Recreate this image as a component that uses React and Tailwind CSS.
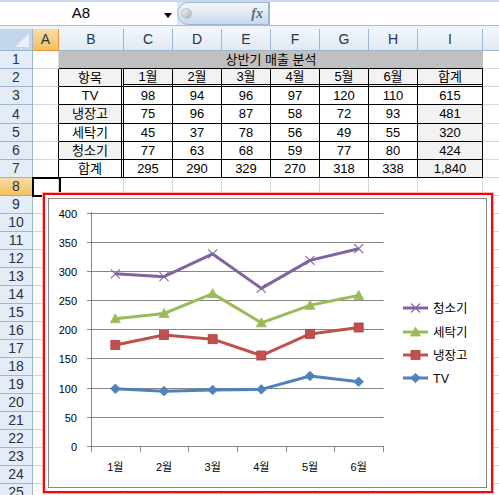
import React from 'react'

const FONT = "font-['Liberation_Sans','Noto_Sans_CJK_KR',sans-serif]"

const COL_W = ['w-[26px]', 'w-[65px]', 'w-[49px]', 'w-[49px]', 'w-[49px]', 'w-[49px]', 'w-[49px]', 'w-[49px]', 'w-[65px]']
const LETTERS = ['A', 'B', 'C', 'D', 'E', 'F', 'G', 'H', 'I']

const months = ['1월', '2월', '3월', '4월', '5월', '6월']
const raw = [
  { name: 'TV', color: '#4f81bd', marker: 'diamond', vals: [98, 94, 96, 97, 120, 110] },
  { name: '냉장고', color: '#c0504d', marker: 'square', vals: [75, 96, 87, 58, 72, 93] },
  { name: '세탁기', color: '#9bbb59', marker: 'triangle', vals: [45, 37, 78, 56, 49, 55] },
  { name: '청소기', color: '#8064a2', marker: 'x', vals: [77, 63, 68, 59, 77, 80] },
]
const totals = months.map((_, i) => raw.reduce((s, r) => s + r.vals[i], 0))

// row heights of the sheet (rows 1..7)
const ROW_H = ['h-[18px]', 'h-[18px]', 'h-[18px]', 'h-[19px]', 'h-[18px]', 'h-[18px]', 'h-[18px]']

function RowHead({ n, selected, h = 'h-[18px]' }) {
  return (
    <div
      className={`w-[33px] shrink-0 ${h} flex items-center justify-center text-[14px] text-[#2a3444] border-r border-b ${
        selected
          ? 'bg-gradient-to-b from-[#f9dca6] to-[#f1c15f] border-[#f29536]'
          : 'bg-[#e4ecf7] border-[#9eb6ce]'
      }`}
    >
      {n}
    </div>
  )
}

function Blank({ w }) {
  return <div className={`${w} shrink-0 border-r border-b border-[#d0d7e5] bg-white`} />
}

function EmptyRow({ n, selected }) {
  return (
    <div className="flex h-[18px]">
      <RowHead n={n} selected={selected} />
      {COL_W.map((w, i) => <Blank key={i} w={w} />)}
      <div className="flex-1 border-b border-[#d0d7e5] bg-white" />
    </div>
  )
}

function TableRow({ n, h, label, cells, total, header, labelGray, totalGray }) {
  return (
    <div className={`flex ${h}`}>
      <RowHead n={n} h={h} />
      <div className="w-[26px] shrink-0 border-r border-b border-r-black border-b-[#d0d7e5] bg-white" />
      <div
        className={`w-[65px] shrink-0 flex items-center justify-center border-r-[3px] border-double border-r-black border-b border-b-black ${
          labelGray ? 'bg-[#f2f2f2]' : 'bg-white'
        }`}
      >
        {label}
      </div>
      {cells.map((c, i) => (
        <div
          key={i}
          className={`w-[49px] shrink-0 flex items-center justify-center border-r border-black ${
            header ? 'border-b-[3px] border-double bg-[#f2f2f2]' : 'border-b bg-white'
          }`}
        >
          {c}
        </div>
      ))}
      <div
        className={`w-[65px] shrink-0 flex items-center justify-center border-r border-black ${
          header ? 'border-b-[3px] border-double' : 'border-b'
        } ${totalGray ? 'bg-[#f2f2f2]' : 'bg-white'}`}
      >
        {total}
      </div>
      <div className="flex-1 border-b border-[#d0d7e5] bg-white" />
    </div>
  )
}

function Marker({ type, x, y, color }) {
  if (type === 'diamond')
    return <polygon points={`${x},${y - 4.8} ${x + 4.8},${y} ${x},${y + 4.8} ${x - 4.8},${y}`} fill={color} stroke={color} strokeWidth="0.8" />
  if (type === 'square')
    return <rect x={x - 4.5} y={y - 4.5} width="9" height="9" fill={color} stroke="#b0403d" strokeWidth="0.8" />
  if (type === 'triangle')
    return <polygon points={`${x},${y - 5} ${x + 5},${y + 4} ${x - 5},${y + 4}`} fill={color} stroke={color} strokeWidth="0.8" />
  return (
    <g stroke={color} strokeWidth="1.1">
      <line x1={x - 4.5} y1={y - 4.5} x2={x + 4.5} y2={y + 4.5} />
      <line x1={x - 4.5} y1={y + 4.5} x2={x + 4.5} y2={y - 4.5} />
    </g>
  )
}

function Chart() {
  const X0 = 91
  const X1 = 383
  const step = (X1 - X0) / 6
  const xs = months.map((_, i) => X0 + step * (i + 0.5))
  const yOf = v => 446 - v * (233.5 / 400)
  let acc = [0, 0, 0, 0, 0, 0]
  const series = raw.map(r => {
    acc = acc.map((a, i) => a + r.vals[i])
    return { ...r, stacked: acc }
  })
  const legendY = { 청소기: 308, 세탁기: 332, 냉장고: 355, TV: 378 }

  return (
    <svg width="437" height="288" viewBox="49 199 437 288" className="block">
      {/* gridlines + value axis */}
      {[0, 50, 100, 150, 200, 250, 300, 350, 400].map(v => {
        const y = Math.round(yOf(v)) + 0.5
        return (
          <g key={v}>
            <line x1="87" x2={X1 + 0.5} y1={y} y2={y} stroke="#868686" strokeWidth="1" />
            <text x="77" y={y + 4} textAnchor="end" fontSize="11" fill="#000">{v}</text>
          </g>
        )
      })}
      <line x1={X0 + 0.5} x2={X0 + 0.5} y1="212" y2="446" stroke="#868686" strokeWidth="1" />
      {[0, 1, 2, 3, 4, 5, 6].map(i => {
        const x = Math.round(X0 + step * i) + 0.5
        return <line key={i} x1={x} x2={x} y1="446" y2="452" stroke="#868686" strokeWidth="1" />
      })}
      {months.map((m, i) => (
        <text key={m} x={xs[i]} y="471" textAnchor="middle" fontSize="11" fill="#000">{m}</text>
      ))}

      {/* series */}
      {series.map(s => (
        <g key={s.name}>
          <polyline
            points={s.stacked.map((v, i) => `${xs[i]},${yOf(v)}`).join(' ')}
            fill="none"
            stroke={s.color}
            strokeWidth="3"
            strokeLinejoin="round"
          />
          {s.stacked.map((v, i) => (
            <Marker key={i} type={s.marker} x={xs[i]} y={yOf(v)} color={s.color} />
          ))}
        </g>
      ))}

      {/* legend */}
      {series.map(s => (
        <g key={s.name}>
          <line x1="403" x2="428" y1={legendY[s.name]} y2={legendY[s.name]} stroke={s.color} strokeWidth="3" />
          <Marker type={s.marker} x={415.5} y={legendY[s.name]} color={s.color} />
          <text x="433" y={legendY[s.name] + 4.5} fontSize="12.5" fill="#000">{s.name}</text>
        </g>
      ))}
    </svg>
  )
}

export default function App() {
  return (
    <div className={`relative w-[499px] h-[495px] overflow-hidden bg-white ${FONT} text-black`}>

      {/* Formula bar */}
      <div className="h-[29px] bg-[#dde7f3] flex flex-col">
        <div className="h-[2px] bg-[#c9d8ec]" />
        <div className="h-[23px] flex">
          <div className="w-[177px] shrink-0 bg-white flex items-center relative">
            <span className="w-[160px] text-center text-[15px] pl-[2px]">A8</span>
            <svg width="8" height="5" viewBox="0 0 8 5" className="absolute left-[164px] top-[11px]">
              <polygon points="0,0 8,0 4,5" fill="#000" />
            </svg>
          </div>
          <div className="w-[92px] shrink-0 rounded-l-full border border-[#9fb5d0] bg-gradient-to-b from-[#f5f8fc] to-[#c8d8ed] flex items-center justify-between pl-[3px] pr-[5px]">
            <div className="w-[11px] h-[11px] rounded-full bg-gradient-to-br from-[#f4f4f4] to-[#a9b1bb] border border-[#b8c2ce]" />
            <span className="font-['Liberation_Serif',serif] italic font-bold text-[14px] text-[#5f6c7d] leading-none">fx</span>
          </div>
          <div className="flex-1 bg-white border-l border-[#9eb6ce]" />
        </div>
        <div className="h-[1px] bg-[#a9bfd9]" />
        <div className="flex-1 bg-[#eef3fa]" />
      </div>

      {/* Column headers */}
      <div className="flex h-[22px]">
        <div className="w-[33px] shrink-0 bg-[#c3d6ee] border-r border-b border-[#9eb6ce] relative">
          <svg width="14" height="14" viewBox="0 0 14 14" className="absolute right-[3px] bottom-[3px]">
            <polygon points="14,0 14,14 0,14" fill="#e9f0f9" />
          </svg>
        </div>
        {LETTERS.map((l, i) => (
          <div
            key={l}
            className={`${COL_W[i]} shrink-0 flex items-center justify-center text-[14px] text-[#2a3444] border-r border-b ${
              l === 'A'
                ? 'bg-gradient-to-b from-[#f9dca6] to-[#f1c15f] border-[#f29536]'
                : 'bg-gradient-to-b from-[#f3f7fc] to-[#e0e9f5] border-[#9eb6ce]'
            }`}
          >
            {l}
          </div>
        ))}
        <div className="flex-1 bg-gradient-to-b from-[#f3f7fc] to-[#e0e9f5] border-b border-[#9eb6ce]" />
      </div>

      {/* Sheet */}
      <div className="text-[13px]">
        <div className="flex h-[18px]">
          <RowHead n={1} />
          <Blank w="w-[26px]" />
          <div className="w-[424px] shrink-0 bg-[#c0c0c0] border-b border-black flex items-center justify-center">
            상반기 매출 분석
          </div>
          <div className="flex-1 border-b border-[#d0d7e5] bg-white" />
        </div>
        <TableRow n={2} h={ROW_H[1]} header label="항목" cells={months} total="합계" labelGray totalGray />
        {raw.map((r, i) => (
          <TableRow
            key={r.name}
            n={3 + i}
            h={ROW_H[2 + i]}
            label={r.name}
            cells={r.vals}
            total={r.vals.reduce((a, b) => a + b, 0)}
            labelGray={i % 2 === 1}
            totalGray={i > 0}
          />
        ))}
        <TableRow n={7} h={ROW_H[6]} label="합계" cells={totals} total="1,840" totalGray />
        {Array.from({ length: 18 }, (_, i) => (
          <EmptyRow key={i} n={8 + i} selected={i === 0} />
        ))}
      </div>

      {/* Active cell A8 */}
      <div className="absolute left-[32px] top-[177px] w-[29px] h-[20px] border-2 border-black" />
      <div className="absolute left-[57px] top-[193px] w-[5px] h-[5px] bg-black border border-white" />

      {/* Chart object */}
      <div className="absolute left-[42px] top-[192px] w-[452px] h-[302px] border border-[#ffb4b4]">
        <div className="w-full h-full border-2 border-[#ff0000] bg-white pl-[3px] pt-[3px]">
          <div className="w-[439px] h-[290px] border border-[#868686] bg-white">
            <Chart />
          </div>
        </div>
      </div>
    </div>
  )
}
